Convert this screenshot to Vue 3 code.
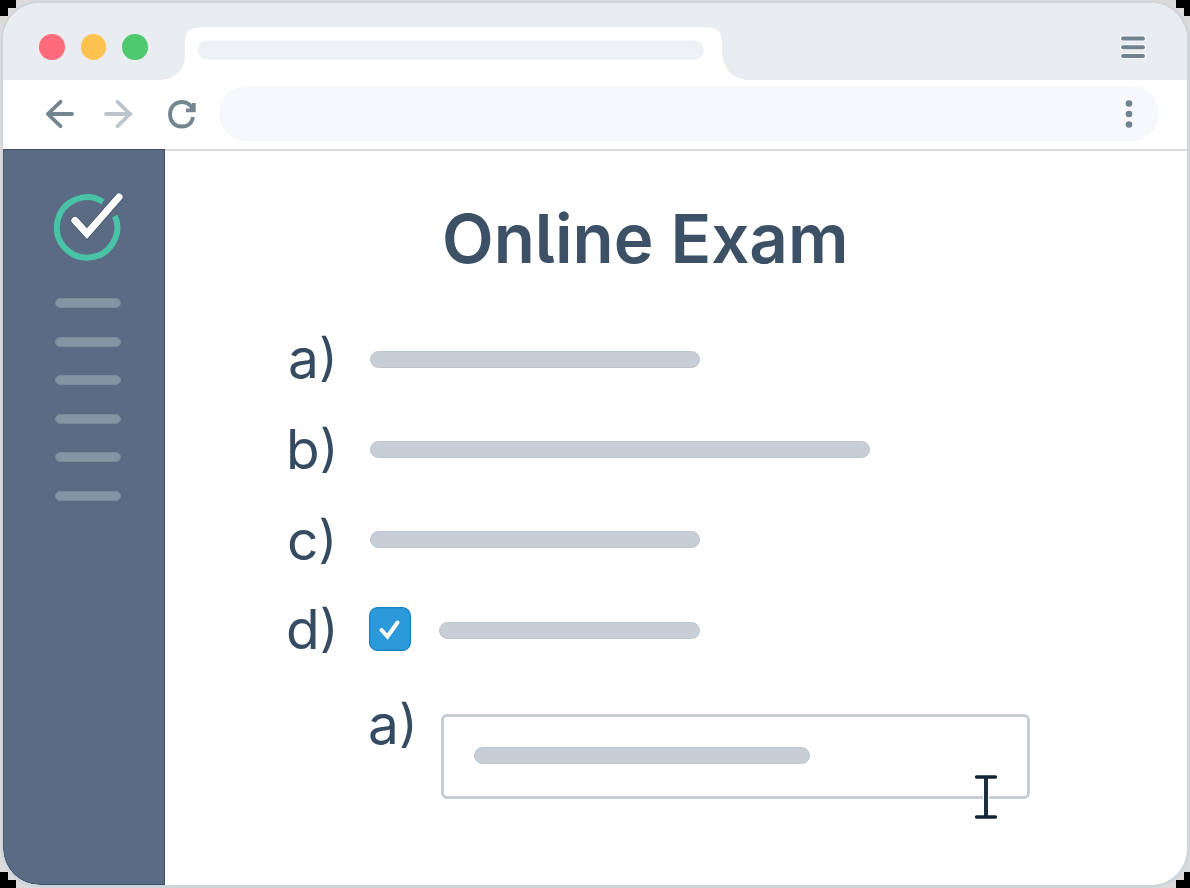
<script setup>
const menuLines = 6
const options = [
  { letter: 'a', kind: 'short' },
  { letter: 'b', kind: 'long' },
  { letter: 'c', kind: 'short' },
  { letter: 'd', kind: 'checked', checked: true },
]
</script>

<template>
  <div class="stage">
    <svg class="corners" width="1190" height="888" viewBox="0 0 1190 888" shape-rendering="crispEdges">
      <path d="M0 0H16V8H8V16H0ZM1176 0H1190V16H1184V8H1176ZM0 872H8V880H16V888H0ZM1184 872H1190V888H1176V880H1184Z" />
    </svg>
    <div class="window">
      <header class="tabbar">
        <div class="lights"><i class="red" /><i class="amber" /><i class="green" /></div>
        <svg class="tab" width="586" height="53" viewBox="0 0 586 53">
          <path d="M0 53C17 51 24 42 24 27V15Q24 .5 38 .5H547Q561 .5 561 15V27C563 43 571 51 586 53Z" fill="#fff" />
          <rect x="37" y="13.500" width="506" height="19" rx="9.500" fill="#edf1f4" />
        </svg>
        <svg class="burger" width="28" height="24" viewBox="0 0 28 24" stroke-linecap="round">
          <path d="M4 3.500H24M4 12.300H24M4 21H24" stroke="#f7fafb" stroke-width="6" />
          <path d="M4 3.500H24M4 12.300H24M4 21H24" stroke="#708390" stroke-width="3.900" />
        </svg>
      </header>

      <div class="toolbar">
        <svg class="nav" width="160" height="36" viewBox="0 0 160 36" fill="none" stroke-width="3.800" stroke-linecap="round" stroke-linejoin="round">
          <path d="M29 18H5M17.500 5.800L4.800 18L17.500 30.200" stroke="#748592" />
          <path d="M63 18H87.500M74.500 5.800L87 18L74.500 30.200" stroke="#bcc5cd" />
          <path d="M150 21C149 27 145 30.500 138.700 30.500C131.500 30.500 127 25.500 127 18.300C127 11 132 6 139 6C144 6 147.500 8.500 150 13M150.800 7V14.300H143" stroke="#748592" stroke-linecap="butt" stroke-linejoin="miter" />
        </svg>
        <div class="address">
          <svg width="10" height="30" viewBox="0 0 10 30" fill="#718390">
            <circle cx="5" cy="4.500" r="3.300" /><circle cx="5" cy="15" r="3.300" /><circle cx="5" cy="25.500" r="3.300" />
          </svg>
        </div>
      </div>

      <div class="body">
        <aside class="sidebar">
          <svg class="logo" width="74" height="72" viewBox="0 0 74 72" fill="none">
            <path d="M53 10.800A30.200 30.200 0 1 0 65 25" stroke="#48c3a6" stroke-width="6" />
            <path d="M25 29.500L37 42.700L69 6" stroke="#34485f" stroke-width="8.300" stroke-linecap="round" />
            <path d="M25 29.500L37 42.700L69 6" stroke="#fff" stroke-width="7.200" stroke-linecap="round" stroke-linejoin="miter" />
          </svg>
          <div class="lines"><i v-for="n in menuLines" :key="n" /></div>
        </aside>

        <main class="exam">
          <svg class="title" width="440" height="100" viewBox="0 0 440 100" role="heading">
            <text x="13" y="78.500" textLength="406.500" lengthAdjust="spacingAndGlyphs">Online Exam</text>
          </svg>
          <div class="options">
            <div v-for="option in options" :key="option.letter" class="option">
              <span class="label" :class="'letter-' + option.letter"><span>{{ option.letter }}</span><span class="paren">)</span></span>
              <svg v-if="option.checked" class="checkbox" width="42" height="44" viewBox="0 0 42 44">
                <rect x=".6" y=".6" width="40.800" height="42.800" rx="8" fill="#2b99da" stroke="#1b80c2" stroke-width="1.200" />
                <path d="M12.500 23L18.500 29.500L28.500 15.500" fill="none" stroke="#fff" stroke-width="4" stroke-linecap="round" />
              </svg>
              <i class="bar" :class="option.kind" />
            </div>
          </div>
          <div class="answer">
            <span class="label letter-a"><span>a</span><span class="paren">)</span></span>
            <div class="field">
              <i class="bar" />
              <svg class="cursor" width="24" height="46" viewBox="0 0 24 46" fill="none">
                <path d="M12 3V43" stroke="#fff" stroke-width="6" />
                <path d="M12 3V43" stroke="#1c3042" stroke-width="4" />
                <path d="M2.500 3H21.500M2.500 43H21.500" stroke="#142536" stroke-width="3.400" stroke-linecap="round" />
              </svg>
            </div>
          </div>
        </main>
      </div>
    </div>
  </div>
</template>

<style>
body { margin: 0; overflow: hidden; }
</style>

<style scoped>
* { box-sizing: border-box; }
i { display: block; flex: none; }
svg { display: block; flex: none; }
.stage { position: relative; width: 1190px; height: 888px; padding: 1px 0 0 1px; background: #dcdada; }
.corners { position: absolute; left: 0; top: 0; }
.window {
  position: relative; display: flex; flex-direction: column;
  width: 1189px; height: 887px; overflow: hidden;
  border: 2px solid #ced6dc; border-right-width: 3px; border-bottom-width: 3px;
  border-radius: 39px; background: #fff;
}
.tabbar { display: flex; align-items: flex-end; height: 77px; flex: none; background: #e9edf2; }
.lights { display: flex; gap: 16px; align-self: flex-start; padding: 31px 0 0 36px; }
.lights i { width: 25.500px; height: 25.500px; border-radius: 50%; }
.red { background: #ff6b7a; }
.amber { background: #fec24e; }
.green { background: #4fc970; }
.tab { margin-left: 13.500px; }
.burger { margin: 0 40px 21px auto; }
.toolbar { display: flex; align-items: center; height: 71px; padding-bottom: 2px; flex: none; border-bottom: 2px solid #dadcdf; background: #fff; }
.nav { margin-left: 40px; }
.address {
  display: flex; align-items: center; justify-content: flex-end;
  width: 940px; height: 55px; margin: 0 0 1px 16px; padding: 2px 25px 0 0;
  border-radius: 28px; background: #f7f8fb;
}
.body { display: flex; flex: 1; margin-top: -2px; }
.sidebar {
  width: 162px; padding-top: 41px; position: relative;
  border: 1px solid #3b526b; border-left-color: #405870;
  border-bottom-left-radius: 37px; background: #5a6b83;
}
.logo { margin-left: 46px; }
.lines { display: flex; flex-direction: column; gap: 28.600px; padding: 35px 0 0 51px; }
.lines i { width: 66px; height: 10px; border-radius: 5px; background: #8494a2; border: 1px solid #788999; }
.exam { flex: 1; padding-top: 35px; color: #3d5166; font-family: Inter, "Liberation Sans", sans-serif; }
.title { margin-left: 264px; overflow: visible; }
.title text { font-size: 68px; font-weight: 600; fill: #3d5166; font-feature-settings: "cv05"; }
.options { display: grid; grid-template-rows: repeat(4, 90.400px); padding: 30px 0 0 122px; }
.option { display: flex; align-items: center; }
.label {
  display: flex; flex: none; align-items: baseline; justify-content: space-between;
  width: 48px; margin: 0 35px 0 0; font-size: 55px; line-height: 64px; color: #354b61;
}
.paren { font-size: 51px; transform: translateY(-3px); }
.letter-a { padding-left: 1px; }
.letter-b > :first-child { margin-left: -1px; }
.letter-c { margin-top: 2px; }
.letter-d > :first-child { margin-left: -1px; }
.bar { height: 17px; border-radius: 8.500px; background: #c8ced6; border: 1px solid #bcc5cd; }
.short { width: 330px; }
.long { width: 500px; }
.checked { width: 261px; }
.checkbox { margin: -3px 28px 0 -1px; }
.answer { display: flex; padding: 47px 0 0 202px; }
.answer .label { margin: -31px 26px 0 0; }
.field {
  position: relative; width: 589px; height: 85px; padding: 30px;
  border: 3px solid #c6cdd5; border-radius: 6px; margin-top: -9px;
}
.field .bar { width: 336px; }
.cursor { position: absolute; left: 530px; top: 57px; }
</style>
